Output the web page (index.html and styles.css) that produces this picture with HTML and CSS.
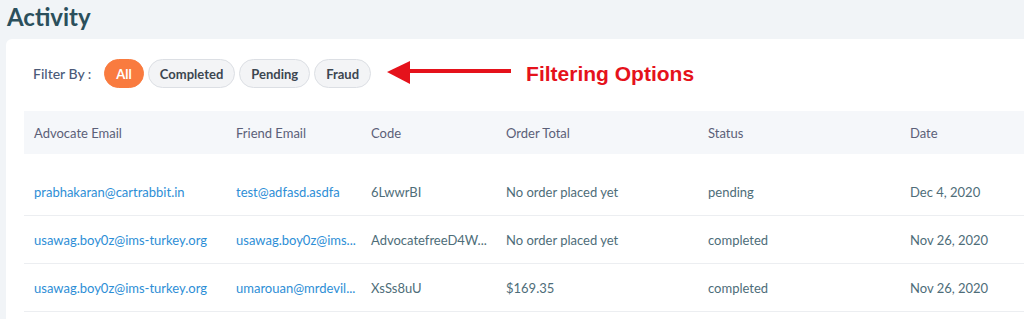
FILE: index.html
```html
<!DOCTYPE html>
<html lang="en">
<head>
    <meta charset="UTF-8">
    <meta name="viewport" content="width=device-width, initial-scale=1.0">
    <title>Activity</title>
    <link rel="stylesheet" href="styles.css">
</head>
<body>
    <h1 class="title">Activity</h1>
    <div class="card">
        <div class="filters">
            <span class="filter-label">Filter By :</span>
            <button class="pill active">All</button>
            <button class="pill">Completed</button>
            <button class="pill">Pending</button>
            <button class="pill">Fraud</button>
            <svg class="arrow" width="126" height="26" viewBox="0 0 126 26">
                <polygon points="0,11 23,0 23,23" fill="#e5121b"/>
                <rect x="22" y="8" width="102" height="4" fill="#e5121b"/>
            </svg>
            <span class="note">Filtering Options</span>
        </div>
        <table class="activity">
            <colgroup>
                <col class="c-wide">
                <col class="c-narrow">
                <col class="c-narrow">
                <col class="c-wide">
                <col class="c-wide">
                <col>
            </colgroup>
            <thead>
                <tr>
                    <th>Advocate Email</th>
                    <th>Friend Email</th>
                    <th>Code</th>
                    <th>Order Total</th>
                    <th>Status</th>
                    <th>Date</th>
                </tr>
            </thead>
            <tbody>
                <tr class="first">
                    <td><a href="#">prabhakaran@cartrabbit.in</a></td>
                    <td><a href="#">test@adfasd.asdfa</a></td>
                    <td>6LwwrBI</td>
                    <td>No order placed yet</td>
                    <td>pending</td>
                    <td>Dec 4, 2020</td>
                </tr>
                <tr>
                    <td><a href="#">usawag.boy0z@ims-turkey.org</a></td>
                    <td><a href="#" title="usawag.boy0z@ims-turkey.org">usawag.boy0z@ims...</a></td>
                    <td title="AdvocatefreeD4W3kqP">AdvocatefreeD4W...</td>
                    <td>No order placed yet</td>
                    <td>completed</td>
                    <td>Nov 26, 2020</td>
                </tr>
                <tr>
                    <td><a href="#">usawag.boy0z@ims-turkey.org</a></td>
                    <td><a href="#" title="umarouan@mrdevilstore.com">umarouan@mrdevil...</a></td>
                    <td>XsSs8uU</td>
                    <td>$169.35</td>
                    <td>completed</td>
                    <td>Nov 26, 2020</td>
                </tr>
            </tbody>
        </table>
    </div>
</body>
</html>
```

FILE: styles.css
```css
body {
    margin: 0;
    padding: 0 0 0 6px;
    background-color: #f1f4f7;
    font-family: Lato, "Noto Sans", sans-serif;
    height: 100vh;
    overflow: hidden;
    display: flex;
    flex-direction: column;
}
.title {
    margin: 0 0 5px 1px;
    font-size: 24px;
    line-height: 34px;
    font-weight: 700;
    color: #2b4f5c;
}
.card {
    flex: 1;
    background-color: #fff;
    border-radius: 6px 0 0 0;
    padding: 20px 0 0 18px;
}
.filters {
    display: flex;
    align-items: center;
    height: 29px;
    margin-bottom: 23px;
}
.filter-label {
    margin-left: 9px;
    margin-right: 13px;
    font-size: 14px;
    font-weight: 500;
    color: #4b5a78;
}
.pill {
    height: 29px;
    padding: 0 11px;
    margin-right: 4px;
    border: 1px solid #dcdfe4;
    border-radius: 15px;
    background-color: #f3f4f6;
    font-family: Lato, sans-serif;
    font-size: 13px;
    font-weight: 700;
    color: #3c4650;
}
.pill.active {
    border-color: #f97b3f;
    background-color: #f97b3f;
    color: #fff;
}
.arrow {
    margin-left: 12px;
    margin-top: 1px;
}
.note {
    margin-left: 13px;
    font-family: "Liberation Sans", Arial, sans-serif;
    font-size: 21px;
    font-weight: 700;
    color: #e5121b;
}
.activity {
    width: 1000px;
    border-collapse: collapse;
    table-layout: fixed;
    font-size: 13px;
}
.c-wide {
    width: 202px;
}
.c-narrow {
    width: 135px;
}
.activity th {
    height: 43px;
    padding: 0 10px;
    background-color: #f5f7fa;
    text-align: left;
    font-weight: 400;
    color: #5b6078;
}
.activity td {
    height: 47px;
    padding: 0 10px;
    border-bottom: 1px solid #eceef1;
    color: #4e6d79;
    white-space: nowrap;
}
.activity tr.first td {
    padding-top: 14px;
}
.activity a {
    color: #2d8ed6;
    text-decoration: none;
}
```
